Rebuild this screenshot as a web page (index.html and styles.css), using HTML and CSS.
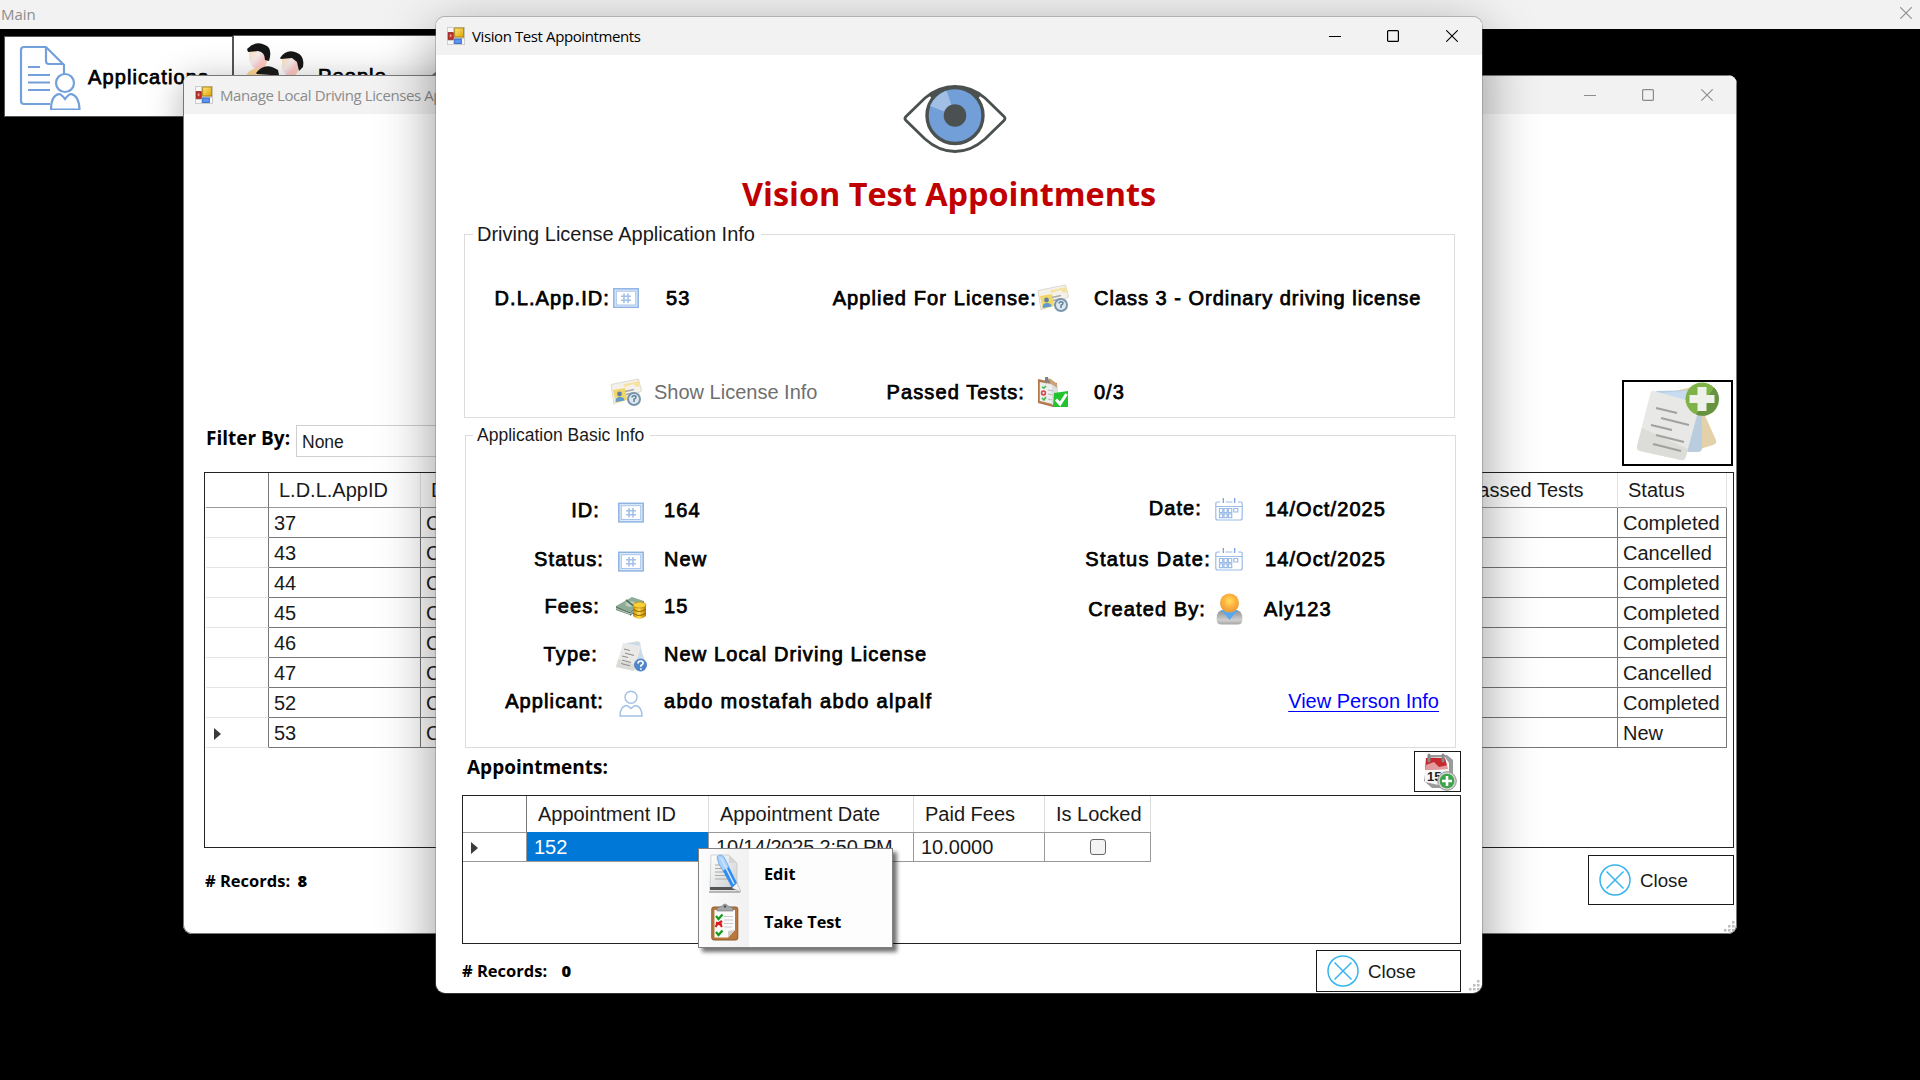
FILE: index.html
```html
<!DOCTYPE html>
<html lang="en">
<head>
<meta charset="utf-8">
<title>Main</title>
<link rel="stylesheet" href="styles.css">
</head>
<body>
<svg class="defs" width="0" height="0" aria-hidden="true">
  <defs>
    <linearGradient id="gold" x1="0" y1="0" x2="1" y2="1"><stop offset="0" stop-color="#ffe680"/><stop offset="1" stop-color="#e0a200"/></linearGradient>
    <linearGradient id="coin" x1="0" y1="0" x2="1" y2="0"><stop offset="0" stop-color="#c98a00"/><stop offset=".45" stop-color="#ffdf4d"/><stop offset="1" stop-color="#b87b00"/></linearGradient>
    <radialGradient id="head" cx=".5" cy=".4" r=".6"><stop offset="0" stop-color="#ffe45c"/><stop offset=".5" stop-color="#ffb340"/><stop offset="1" stop-color="#e99a35"/></radialGradient>
    <linearGradient id="torso" x1="0" y1="0" x2="0" y2="1"><stop offset="0" stop-color="#8d8d8d"/><stop offset=".7" stop-color="#cfcfcf"/><stop offset="1" stop-color="#a5a5a5"/></linearGradient>
    <linearGradient id="leaf" x1="0" y1="0" x2="1" y2="1"><stop offset="0" stop-color="#ffffff"/><stop offset="1" stop-color="#c9cccf"/></linearGradient>
    <linearGradient id="skin" x1="0" y1="0" x2="1" y2="1"><stop offset="0" stop-color="#ffd9a8"/><stop offset=".4" stop-color="#f6eeee"/><stop offset=".65" stop-color="#ffc9c9"/><stop offset="1" stop-color="#ffd59b"/></linearGradient>

    <symbol id="i-form" viewBox="0 0 18 18">
      <rect width="18" height="18" fill="#cdcdcd"/>
      <path d="M1 1h5v4H1zM1 14h5v3H1zM15 12h2v5h-2z" fill="#f7f7f7"/>
      <rect x="1.2" y="5.7" width="5" height="6.6" fill="#c8322c" stroke="#8f1712" stroke-width=".8"/><rect x="2.8" y="7.5" width="1.6" height="2.4" fill="#f0a09a"/>
      <rect x="7.7" y="1" width="9" height="9" fill="url(#gold)" stroke="#a57a00" stroke-width=".8"/>
      <rect x="7.7" y="12" width="6.6" height="4.6" fill="#5b95f5" stroke="#2f5fc0" stroke-width=".8"/>
    </symbol>
    <symbol id="i-number" viewBox="0 0 26 20">
      <rect x=".8" y=".8" width="24.4" height="18.6" fill="#dbe9f9" stroke="#8fb3e3" stroke-width="1.5"/>
      <rect x="3.3" y="3.2" width="19.4" height="13.8" fill="#fff" stroke="#a9c4ea" stroke-width="1"/>
      <path d="M11 5.500v9.500M15 5.500v9.500M8 8.300h10M8 12.300h10" stroke="#a3c0e9" stroke-width="1.600" fill="none"/>
    </symbol>
    <symbol id="i-license" viewBox="0 0 32 28">
      <path d="M1 6.500 28.500 1l3 12L4 26z" fill="#f4f1ea" stroke="#d4d1ca" stroke-width=".8"/>
      <path d="M13 6.500 29 3l1.500 5-4 1-3-3-9 3z" fill="#f5e2a0"/>
      <path d="M3 12 15 10l2 12L6 25z" fill="#f1d768"/>
      <path d="M15 13.500l9-2M16 16.500l8-1.800" stroke="#a9a9a9" stroke-width="1.400"/>
      <circle cx="9.500" cy="16" r="2.400" fill="#63819d"/><path d="M5.500 24q0-5 4.500-5t4.500 3.500z" fill="#5f9ad3"/>
      <circle cx="24" cy="21" r="6" fill="#dfe8f0" stroke="#7895ab" stroke-width="2"/>
      <path d="M22 19.500q0-1.800 2-1.800t2 1.600q0 1.100-2 2V24" stroke="#5e8099" stroke-width="1.500" fill="none"/>
    </symbol>
    <symbol id="i-passed" viewBox="0 0 32 32">
      <path d="M1 3 20 7v21l-4 3L1 27z" fill="#b5794d"/><path d="M8 1.500 14 3l6 5 2 21-6-2z" fill="#caa27c"/>
      <path d="M2.800 6 15 8.500V28L2.800 25z" fill="#eceded"/><path d="M15 8.500l6 4V28l-6 1z" fill="#dcdddf"/>
      <path d="M5 11l2 1 2-2M5 22l2 2 2-3" stroke="#49bb55" stroke-width="1.700" fill="none"/><circle cx="6.500" cy="17" r="1.900" fill="none" stroke="#e23c3c" stroke-width="1.500"/>
      <path d="M11 14l5 1M11 18l5 1M11 23l4 1" stroke="#bbb"/><path d="M8 1h3v3l2 1v2l-5-1z" fill="#7b8288"/>
      <path d="M17 17 31 15v16H16z" fill="#21c32f"/><path d="M19 23.500l4 4.500 6.500-10" stroke="#fff" stroke-width="3" fill="none"/>
    </symbol>
    <symbol id="i-money" viewBox="0 0 32 24">
      <path d="M1 10 17 1l12 4-14 11z" fill="#8fac96"/><path d="M1 10l14 6v3L1 14zM15 16 29 5v4L15 20z" fill="#5b7b66"/><path d="M1 12.500 15 18 29 7" stroke="#c3d4c6" fill="none"/>
      <ellipse cx="15.500" cy="8" rx="5" ry="2.800" fill="#bcd1bd"/><path d="M11 4l9 7" stroke="#56705e" stroke-width="1.600"/>
      <path d="M18 9v11q6 6 13 0V9z" fill="url(#coin)"/><path d="M18 13q6 5 13 0M18 17q6 5 13 0" stroke="#936100" fill="none"/><ellipse cx="24.500" cy="9" rx="6.500" ry="3" fill="#f7cf3c" stroke="#b98500" stroke-width=".7"/>
    </symbol>
    <symbol id="i-type" viewBox="0 0 32 32">
      <path d="M14 3 23 1l7 20-10 5z" fill="#ecd9b3"/><path d="M11 3l14-1 4 22-12 3z" fill="#c8dcef"/>
      <path d="M8 3 26 6 19 31 1 27z" fill="#eae9e7"/><path d="M3 19 21 25l-2 6L1 27z" fill="#dcdbd8"/>
      <path d="M9 9l6 1.500M10 13l9 2.500M7 16l6 1.500M7 20l9 2.500M6 23.500l9 2.300" stroke="#8b8b8b" stroke-width="1"/>
      <circle cx="25.500" cy="25" r="6.500" fill="#5186c9"/><path d="M23 23.500q0-2.500 2.600-2.500t2.500 2.300q0 1.200-2.200 2.200v1.300M25.900 28.200v1.500" stroke="#fff" stroke-width="1.700" fill="none"/>
    </symbol>
    <symbol id="i-person" viewBox="0 0 24 27">
      <g fill="#fff" stroke="#a3c1e8" stroke-width="1.400"><circle cx="12" cy="7.300" r="6"/><path d="M1 26q0-9 6-10.500 2 0 5 3 3-3 5-3 6 1.500 6 10.500z"/></g>
    </symbol>
    <symbol id="i-calendar" viewBox="0 0 28 23">
      <g fill="none" stroke="#9bbce8" stroke-width="1.200">
        <path d="M5 4H2.500Q.8 4 .8 6v14q0 2 2 2h22.400q2 0 2-2V6q0-2-1.700-2H23M10.500 4h7M.8 8.500h26.400"/><path d="M8.300 0v5M19.700 0v5" stroke="#6f9bd8"/>
        <path d="M4.500 10.500h3.200v4H4.500zM9 10.500h3.200v4H9zM13.500 10.500h3.200v4h-3.200zM18.800 10.500h4v3.500h-4zM4.500 15.800h3.200v3.800H4.500zM9 15.800h3.200v3.800H9zM13.500 15.800h3.200v3.800h-3.200z"/>
      </g>
    </symbol>
    <symbol id="i-user" viewBox="0 0 27 32">
      <path d="M.7 25Q.7 17 8 17h11q7.300 0 7.300 8v2q0 4.500-5 4.500H5.700q-5 0-5-4.500z" fill="url(#torso)"/><path d="M5 17h17l-8.500 10z" fill="#5aa9ee"/><circle cx="13.500" cy="10" r="9.500" fill="url(#head)"/>
    </symbol>
    <symbol id="i-cross" viewBox="0 0 32 32">
      <g fill="none" stroke="#35b4ef" stroke-width="1.500"><circle cx="16" cy="16" r="15"/><path d="M7.500 7.500l17 17M24.500 7.500l-17 17"/></g>
    </symbol>
    <symbol id="i-min" viewBox="0 0 12 12"><path d="M0 6.500h12" stroke="currentColor"/></symbol>
    <symbol id="i-max" viewBox="0 0 12 12"><rect x=".6" y=".6" width="10.800" height="10.800" rx="1" fill="none" stroke="currentColor" stroke-width="1.200"/></symbol>
    <symbol id="i-x" viewBox="0 0 12 12"><path d="M.3.3l11.400 11.400M11.700.3.3 11.700" stroke="currentColor" stroke-width="1.100"/></symbol>
    <symbol id="i-grip" viewBox="0 0 11 11"><path d="M8 0h2.500v2.500H8zM8 4h2.500v2.500H8zM8 8h2.500v2.500H8zM4 4h2.500v2.500H4zM4 8h2.500v2.500H4zM0 8h2.500v2.500H0z" fill="#bdbdbd"/></symbol>
  </defs>
</svg>

<div class="desktop">
  <header class="app-bar"><span>Main</span><svg width="12" height="12"><use href="#i-x"/></svg></header>
  <nav class="toolbar">
    <button class="tool tool-apps">
      <svg width="62" height="66" viewBox="0 0 62 66" fill="none" stroke="#73a0da" stroke-width="2.200">
        <path d="M31 60H5q-3 0-3-3V6q0-3 3-3h22l18 18v9M27 3v14q0 3 3 3h15M9 23h12M9 31h22M9 38.500h22M9 46h22"/>
        <circle cx="46" cy="39" r="9"/><path d="M32 65.500q0-14 8-15.500 2 0 6 5 4-5 6-5 8 1.500 8.500 15.500z"/>
      </svg>
      <span class="strong">Applications</span>
    </button>
    <button class="tool tool-people">
      <svg width="62" height="66" viewBox="0 0 62 66">
        <path d="M3 8q11-8 19 1 1 15-8 20-9-2-11-12z" fill="url(#skin)"/><path d="M1 7Q10-2 19 3q8 3 4 16l-4-1q0-8-7-9L2 10z" fill="#161616"/><path d="M0 35q2-8 12-9l8 9z" fill="#ffd895"/>
        <path d="M36 16q11-6 17 3 1 12-6 16-9 0-11-9z" fill="url(#skin)"/><path d="M34 16q6-9 15-6 10 3 8 15l-4 4-2-9-5-4-11 1z" fill="#161616"/>
        <path d="M14 29q10-4 17 3v15H14z" fill="url(#skin)"/><path d="M10 31q9-12 22-3l2 10-5 2-4-7-14-1z" fill="#1b1b1b"/>
      </svg>
      <span class="strong">People</span>
    </button>
    <svg class="tool-peek" width="6" height="8" viewBox="0 0 6 8"><path d="M0 5 6 0v8H2z" fill="#777"/></svg>
  </nav>

  <section class="window window-back">
    <header class="titlebar inactive">
      <svg width="18" height="18"><use href="#i-form"/></svg><span class="caption">Manage Local Driving Licenses Applications</span>
      <span class="control"><svg width="12" height="12"><use href="#i-min"/></svg></span><span class="control"><svg width="12" height="12"><use href="#i-max"/></svg></span><span class="control"><svg width="12" height="12"><use href="#i-x"/></svg></span>
    </header>
    <div class="back-tools">
      <label class="ui-bold filter-label">Filter By:</label>
      <div class="combo">None</div>
      <button class="add-app">
        <svg width="86" height="80" viewBox="0 0 86 80">
          <path d="M35 10 56 5 80 58q1 4-3 5l-16 5z" fill="#e3d1aa"/><path d="M20 9l40-1q6 0 6 5v53q0 4-4 4H48z" fill="#b9cddf"/><path d="M22 11l38-3 2 14z" fill="#c7dcf0"/>
          <path d="M18 9l42 12q4 1 3 5L50 74q-1 5-5 4L4 69q-4-1-3-5L14 13q1-5 4-4z" fill="#e8e8e6"/><path d="M6 46 52 67l-2 7q-1 5-5 4L4 69q-4-1-3-5z" fill="#dcdcd9"/>
          <path d="M20 26l21 5M25 36l28 7M15 43l21 5M20 53l28 7M17 62l28 7" stroke="#a1a1a1" stroke-width="2.200"/>
          <circle cx="66" cy="17" r="16.500" fill="#7fb347"/><path d="M78 5.500A16.500 16.500 0 0 1 60 32.500z" fill="#67923f"/><path d="M61.500 5h9v8h8v8h-8v8h-9v-8h-8v-8h8z" fill="#eef1ea"/>
        </svg>
      </button>
    </div>
    <div class="grid-frame back-grid">
      <div class="row head"><span></span><span>L.D.L.AppID</span><span>Driving Class</span><span>Passed Tests</span><span>Status</span></div>
      <div class="row"><span></span><span>37</span><span>Class 3</span><span></span><span>Completed</span></div>
      <div class="row"><span></span><span>43</span><span>Class 3</span><span></span><span>Cancelled</span></div>
      <div class="row"><span></span><span>44</span><span>Class 3</span><span></span><span>Completed</span></div>
      <div class="row"><span></span><span>45</span><span>Class 3</span><span></span><span>Completed</span></div>
      <div class="row"><span></span><span>46</span><span>Class 3</span><span></span><span>Completed</span></div>
      <div class="row"><span></span><span>47</span><span>Class 3</span><span></span><span>Cancelled</span></div>
      <div class="row"><span></span><span>52</span><span>Class 3</span><span></span><span>Completed</span></div>
      <div class="row"><span><i class="caret"></i></span><span>53</span><span>Class 3</span><span></span><span>New</span></div>
    </div>
    <footer class="back-foot">
      <div class="ui-bold records"># Records: <b>8</b></div>
      <button class="close-btn tall"><svg width="32" height="32"><use href="#i-cross"/></svg><span>Close</span></button>
    </footer>
    <svg class="grip" width="11" height="11"><use href="#i-grip"/></svg>
  </section>

  <section class="window window-front">
    <header class="titlebar">
      <svg width="18" height="18"><use href="#i-form"/></svg><span class="caption">Vision Test Appointments</span>
      <span class="control"><svg width="12" height="12"><use href="#i-min"/></svg></span><span class="control"><svg width="12" height="12"><use href="#i-max"/></svg></span><span class="control"><svg width="12" height="12"><use href="#i-x"/></svg></span>
    </header>
    <svg class="eye" width="104" height="68" viewBox="0 0 104 68">
      <path d="M3 31.500 22 13Q36 1.500 52 1.500T82 13l19 18.500q2 2 0 4L82 54Q68 66.500 52 66.500T22 54L3 35.500q-2-2 0-4z" fill="#fff" stroke="#4b5050" stroke-width="2.800"/>
      <path d="M26 10Q38 1.500 52 1.500T78 10l-4 5Q52-4 30 15z" fill="#4b5050"/>
      <circle cx="52" cy="30.500" r="28" fill="#729fd8" stroke="#4b5050" stroke-width="3.400"/>
      <path d="M52 30.500 27 21Q32 10 43.500 5.500z" fill="#a1bfe5"/><circle cx="52" cy="30.500" r="11.300" fill="#4b5050"/>
    </svg>
    <h1>Vision Test Appointments</h1>

    <fieldset class="license-info">
      <legend>Driving License Application Info</legend>
      <div class="license-rows">
        <span class="strong label">D.L.App.ID:</span><span class="icon"><svg width="26" height="20"><use href="#i-number"/></svg></span><span class="strong short">53</span>
        <span class="strong label">Applied For License:</span><span class="icon"><svg width="32" height="28"><use href="#i-license"/></svg></span><span class="strong value">Class 3 - Ordinary driving license</span>
        <span></span><span class="icon"><svg width="32" height="28"><use href="#i-license"/></svg></span><span class="disabled">Show License Info</span>
        <span class="strong label gap-12">Passed Tests:</span><span class="icon"><svg width="32" height="32"><use href="#i-passed"/></svg></span><span class="strong value">0/3</span>
      </div>
    </fieldset>

    <fieldset class="basic-info">
      <legend>Application Basic Info</legend>
      <div class="basic-cols">
        <div class="basic-left">
          <span class="strong label gap-4">ID:</span><span class="icon"><svg width="26" height="21"><use href="#i-number"/></svg></span><span class="strong">164</span>
          <span class="strong label">Status:</span><span class="icon"><svg width="26" height="21"><use href="#i-number"/></svg></span><span class="strong">New</span>
          <span class="strong label gap-4">Fees:</span><span class="icon"><svg width="32" height="24"><use href="#i-money"/></svg></span><span class="strong">15</span>
          <span class="strong label gap-6">Type:</span><span class="icon"><svg width="32" height="32"><use href="#i-type"/></svg></span><span class="strong">New Local Driving License</span>
          <span class="strong label">Applicant:</span><span class="icon"><svg width="24" height="27"><use href="#i-person"/></svg></span><span class="strong spread">abdo mostafah abdo alpalf</span>
        </div>
        <div class="basic-right">
          <span class="strong label gap-9 raised">Date:</span><span class="icon"><svg width="28" height="23"><use href="#i-calendar"/></svg></span><span class="strong">14/Oct/2025</span>
          <span class="strong label spread">Status Date:</span><span class="icon"><svg width="28" height="23"><use href="#i-calendar"/></svg></span><span class="strong">14/Oct/2025</span>
          <span class="strong label gap-5">Created By:</span><span class="icon"><svg width="27" height="32"><use href="#i-user"/></svg></span><span class="strong shift">Aly123</span>
          <a class="person-link" href="#">View Person Info</a>
        </div>
      </div>
    </fieldset>

    <div class="list-head">
      <span class="ui-bold appointments">Appointments:</span>
      <button class="add-date">
        <svg width="34" height="38" viewBox="0 0 34 38">
          <path d="M5 2 24 2l6 5v22l-5 6-16 0-8-7z" fill="#9b9b9b"/><path d="M2 5l20-1 4 6v14l-6 9-18-4z" fill="#f7f7f7"/>
          <path d="M3 5h19l3 11-23 1z" fill="#c7292f"/><path d="M3 12l8-3 5 5 9-2v4L2 17z" fill="#f2d9d9" opacity=".65"/>
          <path d="M6 2v6M20 2v6" stroke="#888" stroke-width="3" stroke-linecap="round"/>
          <text x="4" y="28" class="cal-day">15</text>
          <circle cx="24" cy="28" r="9.300" fill="#d2d5d2" stroke="#8f938f"/><circle cx="24" cy="28" r="7.300" fill="#3fa34a"/><path d="M24 23v10M19 28h10" stroke="#fff" stroke-width="2.600"/>
        </svg>
      </button>
    </div>
    <div class="grid-frame front-grid">
      <div class="row head"><span></span><span>Appointment ID</span><span>Appointment Date</span><span>Paid Fees</span><span>Is Locked</span></div>
      <div class="row"><span><i class="caret"></i></span><span class="selected">152</span><span class="tight">10/14/2025 2:50 PM</span><span>10.0000</span><span class="check-cell"><i class="check"></i></span></div>
    </div>
    <footer class="front-foot">
      <div class="ui-bold records wide"># Records: <b>0</b></div>
      <button class="close-btn"><svg width="32" height="32"><use href="#i-cross"/></svg><span>Close</span></button>
    </footer>
    <svg class="grip" width="11" height="11"><use href="#i-grip"/></svg>
  </section>

  <div class="context-menu">
    <div class="menu-item">
      <span class="menu-icon"><svg width="32" height="42" viewBox="0 0 32 42">
        <path d="M0 38h31v2H0z" fill="#888" opacity=".6"/><path d="M2 2h18l8 8v27H1z" fill="url(#leaf)" stroke="#c6c6c6" stroke-width=".8"/><path d="M20 2v8h8z" fill="#d6d6d6"/><path d="M1 34h27v3H1z" fill="#555"/>
        <path d="M6 12h10M6 15.500h12M6 19h13M6 22.500h14M6 26h14" stroke="#aaa"/>
        <path d="M8 4q3-4 7 0l5 10-6 4Q9 11 8 4z" fill="#a9d2fb" stroke="#5b9de0" stroke-width=".7"/><path d="M14 18l6-4 8 16-5 5z" fill="#2f8cf0"/><path d="M12 5l13 26" stroke="#cfe6ff" stroke-width="1.500"/><path d="M23 35l5-5 4 9z" fill="#f4f4f4" stroke="#aaa" stroke-width=".6"/>
      </svg></span><span class="ui-bold menu-text">Edit</span>
    </div>
    <div class="menu-item">
      <span class="menu-icon"><svg width="28" height="38" viewBox="0 0 28 38">
        <rect x=".8" y="4" width="26" height="33" rx="2" fill="#b8783c" stroke="#8c5a2b"/><path d="M3.500 7h20.500v20l-7 7.500H3.500z" fill="#fbfbfb"/><path d="M17 34.500V28l7-1z" fill="#cfcfcf"/>
        <path d="M6 8V5q3-1 5-2 3-4 6 0 2 1 5 2v3z" fill="#a3a8ad" stroke="#777" stroke-width=".6"/><circle cx="14" cy="3.500" r="1.300" fill="#555"/>
        <path d="M5 13l2.500 3 4-4.500M5 29l2.500 3 4-4.500" stroke="#149c1e" stroke-width="2.300" fill="none"/><path d="M4.500 24q3-6 6.500 0M5 19.500l6 2M11 18l-6 4" stroke="#dd1c1c" stroke-width="2.200" fill="none"/>
        <path d="M13 13.500h9M13 17h9M13 20.500h9M13 24h8" stroke="#ccc"/>
      </svg></span><span class="ui-bold menu-text">Take Test</span>
    </div>
  </div>
</div>
</body>
</html>
```
FILE: styles.css
```css
* { box-sizing: border-box; }
body { margin: 0; background: #000; font: 20px/24px "Liberation Sans", Arial, sans-serif; color: #1a1a1a; }
button { margin: 0; padding: 0; font: inherit; color: inherit; background: #fff; border: 1px solid #1a1a1a; border-radius: 0; }
svg { display: block; flex: none; }
.defs { position: absolute; }
.desktop { position: relative; width: 1920px; height: 1080px; overflow: hidden; background: #000; white-space: nowrap; }

/* Emboldened regular face used for form labels and values */
.strong { color: #000; letter-spacing: 1.100px; -webkit-text-stroke: .75px #000; }
.spread { letter-spacing: 1.300px; }
.ui-bold { font: bold 19px/26px "Open Sans", "Noto Sans", sans-serif; color: #000; }

.app-bar { display: flex; justify-content: space-between; align-items: center; height: 29px; padding: 0 8px 1px 1px; background: #f2f2f2; color: #8c8c8c; font: 15px/24px "Open Sans", sans-serif; }
.app-bar svg { margin-top: -2px; }
.toolbar { display: flex; align-items: flex-start; padding: 6px 0 0 4px; }
.tool { display: flex; align-items: center; height: 82px; border-color: #555; }
.tool-apps { width: 229px; height: 81px; margin-top: 1px; padding: 0 0 0 14px; gap: 7px; }
.tool-people { width: 240px; padding: 0 0 0 12px; gap: 10px; }
.tool-people svg { margin-top: -3px; }
.tool-peek { position: relative; margin: 35px 0 0 -41px; }

.window { position: absolute; display: flex; flex-direction: column; background: #fff; border-radius: 9px; overflow: hidden; }
.window-back { left: 183px; top: 75px; width: 1554px; height: 859px; box-shadow: 0 0 0 1px #777 inset, 0 6px 36px rgba(0,0,0,.3); }
.window-front { left: 436px; top: 17px; width: 1046px; height: 976px; box-shadow: 0 -1px 0 0 #b0b0b0, 0 0 0 1px rgba(120,120,120,.4), 0 16px 56px rgba(0,0,0,.42); }
.titlebar { display: flex; align-items: center; height: 38px; flex: none; padding: 0 0 1px 11px; background: #f2f2f2; color: #000; font: 15px/24px "Open Sans", sans-serif; }
.titlebar.inactive { color: #8c8c8c; margin: 1px 1px 0; height: 38px; }
.inactive .control:last-child { width: 59px; }
.caption { flex: 1; margin-left: 7px; letter-spacing: -.4px; }
.control { display: flex; width: 58px; justify-content: center; }
.control:last-child { width: 60px; }
.grip { position: absolute; right: 2px; bottom: 2px; }

.grid-frame { background: #fff; border: 1px solid #222; flex: none; }
.row { display: grid; height: 30px; }
.row > span { border: solid #777; border-width: 0 1px 1px 0; padding: 2px 0 0 5px; line-height: 27px; }
.row > span:first-child { border-bottom-color: #e4e4e4; padding-left: 0; }
.row.head > span { border-color: #e2e2e2; border-bottom-color: #999; padding: 0 0 0 10px; }
.row.head > span:first-child { border-right-color: #777; }
.caret { display: block; width: 0; height: 0; margin: 8px 0 0 8px; border: solid transparent; border-width: 6px 0 6px 7px; border-left-color: #3a3a3a; }

.back-tools { display: flex; height: 358px; padding: 266px 4px 0 23px; flex: none; }
.filter-label { width: 90px; margin-top: 45px; font-size: 19px; }
.combo { width: 300px; height: 32px; margin-top: 45px; padding: 0 5px; border: 1px solid #cfcfcf; font-size: 17.500px; line-height: 32px; }
.add-app { display: flex; justify-content: center; width: 111px; height: 86px; margin-left: auto; border: 2px solid #000; padding-left: 2px; }
.back-grid { width: 1530px; height: 376px; margin-left: 21px; padding-left: 1px; }
.back-grid .row { grid-template-columns: 63px 152px 1034px 163px 109px; width: 1521px; }
.back-grid .head { height: 35px; }
.back-grid .head > span { line-height: 34px; }
.back-foot { display: flex; justify-content: space-between; padding: 7px 3px 0 22px; }
.records { margin-top: 13px; font-size: 16.500px; }
.records b { margin-left: 3px; }
.close-btn { display: flex; align-items: center; width: 145px; height: 42px; padding-left: 10px; gap: 9px; font-size: 18.700px; }
.close-btn span { padding-top: 1px; }
.close-btn.tall { width: 146px; height: 50px; }

.eye { margin: 30px 0 0 467px; }
h1 { margin: 19px 0 0 306px; font: bold 32.400px/42px "Open Sans", sans-serif; color: #c00000; }
fieldset { min-width: 0; margin: 0; padding: 0; border: 1px solid #dcdcdc; flex: none; }
legend { padding: 0 6px 0 4px; margin-left: 8px; }

.license-info { width: 991px; height: 196px; margin: 8px 0 0 28px; }
.license-rows { display: grid; grid-template-columns: 145px 32px 190px 205px 32px 1fr; grid-template-rows: 94px 24px; align-items: start; padding-top: 40px; }
.label { text-align: right; }
.icon { display: flex; justify-content: center; align-items: center; height: 24px; }
.short { padding-left: 24px; }
.license-rows .value { padding-left: 25px; letter-spacing: 1px; }
.disabled { color: #6f6f6f; padding-left: 12px; }
.gap-4 { padding-right: 4px; }
.gap-5 { padding-right: 5px; }
.gap-6 { padding-right: 6px; }
.gap-9 { padding-right: 9px; }
.gap-12 { padding-right: 12px; }

.basic-info { width: 991px; height: 325px; margin: 5px 0 0 29px; }
.basic-info legend { font-size: 17.500px; margin-left: 7px; }
.basic-cols { display: flex; }
.basic-left { display: grid; grid-template-columns: 138px 54px auto; grid-template-rows: 49px 47px 48px 47px 24px; width: 560px; align-items: start; justify-content: start; padding-top: 51px; }
.basic-left > :nth-child(3n) { padding-left: 6px; }
.basic-left .icon { padding-top: 4px; }
.basic-right { display: grid; grid-template-columns: 185px 38px 172px; grid-template-rows: 50px 50px 92px 24px; padding-top: 50px; align-items: start; }
.basic-right > .icon + .strong { padding-left: 16px; }
.basic-right .icon { margin-left: -2px; }
.raised { margin-top: -1px; }
.shift { margin-left: -1px; }
.person-link { grid-column: 1 / 4; justify-self: end; margin-right: -18px; color: #00f; text-decoration-thickness: 1px; text-underline-offset: 3px; }

.list-head { display: flex; justify-content: space-between; align-items: flex-start; height: 47px; padding: 3px 21px 0 31px; flex: none; }
.appointments { margin-top: 3px; }
.add-date { display: flex; justify-content: center; width: 47px; height: 41px; padding: 1px 0 0 4px; }
.cal-day { font: bold 13px "Liberation Sans", sans-serif; fill: #222; }
.front-grid { width: 999px; height: 149px; margin-left: 26px; }
.front-grid .row { grid-template-columns: 64px 182px 205px 131px 106px; width: 688px; }
.front-grid .head { height: 36px; }
.front-grid .head > span { line-height: 36px; }
.front-grid .row > span { border-right-color: #999; border-bottom-color: #999; padding-left: 7px; }
.front-grid .head > span { border-right-color: #ddd; padding-left: 11px; }
.front-grid .row > span:first-child { padding-left: 0; }
.front-grid .row > .selected { background: #0078d7; color: #fff; }
.tight { letter-spacing: -.2px; }
.front-grid .row > .check-cell { display: flex; align-items: center; justify-content: center; padding: 0; }
.check { width: 16px; height: 16px; border: 1px solid #666; border-radius: 3px; background: #f3f3f3; }
.front-foot { display: flex; justify-content: space-between; padding: 6px 21px 0 26px; }
.front-foot .records { margin-top: 8px; }
.records.wide b { margin-left: 10px; }

.context-menu { position: absolute; left: 698px; top: 848px; width: 195px; height: 100px; padding: 1px; border: 1px solid #808080; background: linear-gradient(90deg, #fcfcfc, #f1f1f1 50px, #fdfdfd 50px); box-shadow: 4px 4px 4px rgba(0,0,0,.55); }
.menu-item { display: flex; align-items: center; height: 48px; }
.menu-icon { display: flex; justify-content: center; width: 50px; }
.menu-text { margin-left: 14px; font-size: 16.300px; }
```
